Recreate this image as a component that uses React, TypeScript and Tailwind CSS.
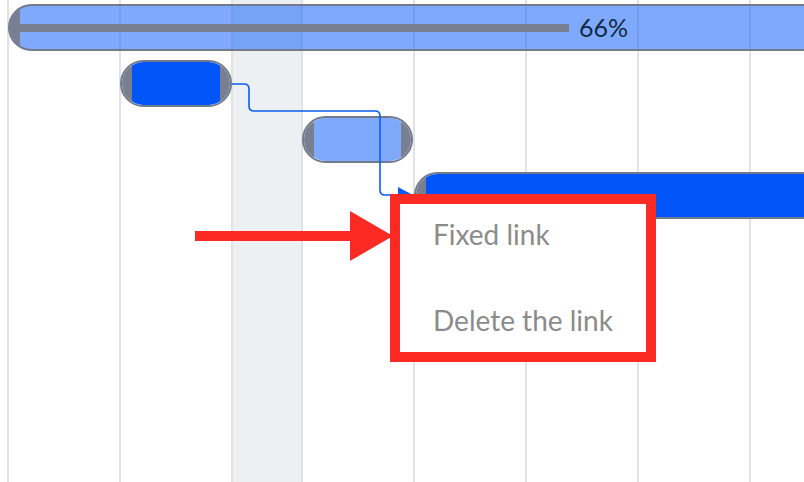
import React from "react";

const font = { fontFamily: '"Lato", "Noto Sans", sans-serif' };

function Bar({ className, light }: { className: string; light?: boolean }) {
  return (
    <div className={`absolute flex h-[47px] overflow-hidden rounded-full border-2 border-[#737a8c] ${className}`}>
      <div className="w-[10px] shrink-0 bg-[#787f90]" />
      <div className={`flex-1 ${light ? "bg-[#0055f9]/50" : "bg-[#0055f9]"}`} />
      <div className="w-[10px] shrink-0 bg-[#787f90]" />
    </div>
  );
}

export default function App() {
  const cols = [112, 112, 70, 112, 112, 112, 112, 112];

  return (
    <div className="relative h-[482px] w-[804px] overflow-hidden bg-white" style={font}>
      {/* Timeline grid */}
      <div className="absolute inset-0 flex">
        <div className="w-[7px] shrink-0" />
        {cols.map((w, i) => (
          <div
            key={i}
            className={`shrink-0 border-l-2 border-[#e2e2e4] ${i === 2 ? "bg-[#edf0f3]" : ""}`}
            style={{ width: w }}
          />
        ))}
      </div>

      {/* Summary bar with progress */}
      <div className="absolute left-[8px] top-[4px] flex h-[47px] w-[820px] overflow-hidden rounded-l-full border-2 border-r-0 border-[#737a8c] bg-[#0055f9]/50">
        <div className="w-[10px] shrink-0 bg-[#787f90]" />
        <div className="relative flex-1">
          <div className="absolute left-0 top-[18px] h-[8px] w-[549px] bg-[#787f90]" />
          <span className="absolute left-[559px] top-[7px] text-[25px] leading-[28px] text-[#0f2a44]">66%</span>
        </div>
      </div>

      <Bar className="left-[120px] top-[60px] w-[112px]" />
      <Bar className="left-[302px] top-[116px] w-[111px]" light />
      <div className="absolute left-[414px] top-[172px] flex h-[47px] w-[420px] overflow-hidden rounded-l-full border-2 border-r-0 border-[#737a8c]">
        <div className="w-[10px] shrink-0 bg-[#787f90]" />
        <div className="flex-1 bg-[#0055f9]" />
      </div>

      {/* Dependency link */}
      <svg className="absolute left-0 top-0" width="804" height="482" fill="none">
        <path
          d="M232 84 H244 Q249 84 249 89 V106 Q249 111 254 111 H375 Q380 111 380 116 V190 Q380 195 385 195 H398"
          stroke="#0a5cf5"
          strokeWidth="1.6"
        />
        <polygon points="398,187 411,194 398,201" fill="#0a5cf5" />
      </svg>

      {/* Context menu */}
      <div className="absolute left-[390px] top-[194px] flex h-[168px] w-[266px] flex-col gap-[50px] border-[10px] border-[#fb2a22] bg-white pl-[33px] pt-[12px] text-[28px] leading-[36px] text-[#8b8b8b]">
        <div>Fixed link</div>
        <div>Delete the link</div>
      </div>

      {/* Pointer arrow */}
      <svg className="absolute left-0 top-0" width="804" height="482">
        <rect x="195" y="231" width="156" height="10" fill="#fb2a22" />
        <polygon points="350,211 393,236 350,261" fill="#fb2a22" />
      </svg>
    </div>
  );
}
